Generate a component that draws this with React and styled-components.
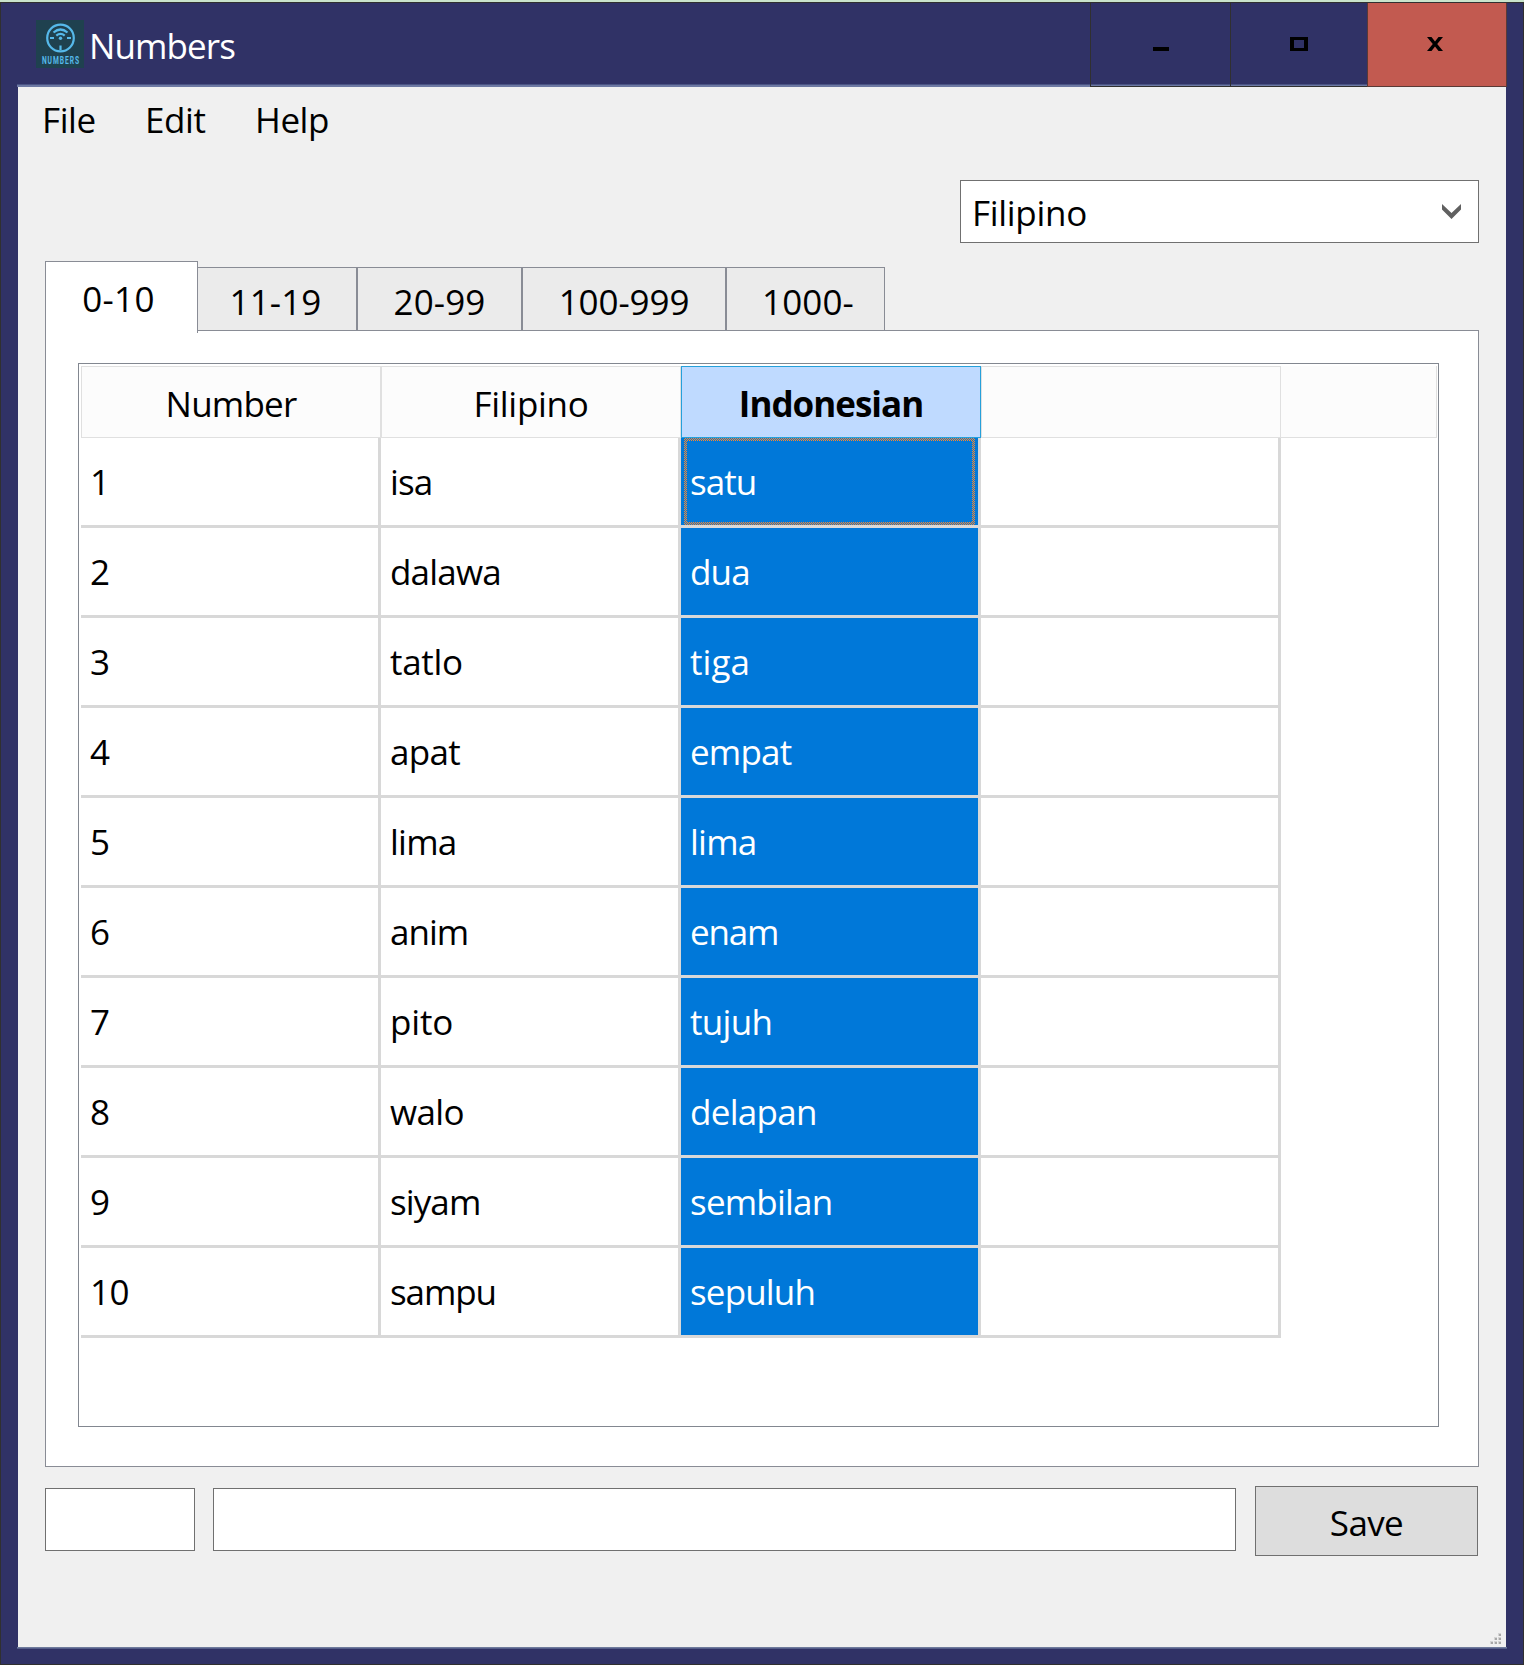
import React from "react";
import styled, { createGlobalStyle, css } from "styled-components";

const GlobalStyle = createGlobalStyle`
  *, *::before, *::after { box-sizing: border-box; }
  body { margin: 0; background: #303266; }
`;

const Screen = styled.div`
  width: 1524px;
  height: 1665px;
  border-top: 2px solid #c9e4cc;
  font-family: "Open Sans", "Noto Sans", sans-serif;
  font-size: 35px;
  line-height: 48px;
  color: #000;
`;

const Frame = styled.div`
  height: 1663px;
  display: flex;
  flex-direction: column;
  padding: 0 16px;
  background: #303266;
  border: 1px solid #303030;
`;

const TitleBar = styled.header`
  flex: none;
  height: 84px;
  display: flex;
  align-items: flex-start;
  padding-left: 19px;
  background: linear-gradient(#303266 81px, #4a5384 81px, #4a5384 82px, #6d79a3 82px);
`;

const AppIcon = styled.svg`
  flex: none;
  width: 48px;
  height: 48px;
  margin-top: 17px;
  overflow: visible;
`;

const Title = styled.h1`
  flex: 1;
  margin: 19px 0 0 5px;
  font: inherit;
  color: #fff;
  letter-spacing: -0.9px;
`;

const WindowButton = styled.button`
  flex: none;
  width: ${(p) => p.$width}px;
  height: 84px;
  padding: 0;
  display: flex;
  border: solid ${(p) => (p.$close ? "#5a3a36" : "#303030")};
  border-width: 0 ${(p) => (p.$close ? 1 : 0)}px 1px 1px;
  background: ${(p) => (p.$close ? "#c25a50" : "transparent")};

  svg { display: block; margin: 34px 0 0 ${(p) => p.$inset}px; }
`;

const Client = styled.main`
  flex: none;
  height: 1560px;
  margin: 0 0 0 1px;
  width: 1488px;
  display: flex;
  flex-direction: column;
  background: #f0f0f0;
`;

const BottomEdge = styled.div`
  flex: none;
  height: 2px;
  background: linear-gradient(#6f7b9c 1px, #565f8a 1px);
`;

const MenuBar = styled.nav`
  display: flex;
  height: 93px;
  padding: 9px 0 0 24px;
`;

const MenuItem = styled.span`
  width: ${(p) => p.$width}px;
  letter-spacing: -0.43px;
`;

const Combo = styled.div`
  align-self: flex-end;
  display: flex;
  justify-content: space-between;
  width: 519px;
  height: 63px;
  margin-right: 27px;
  padding: 8px 17px 0 11px;
  background: #fff;
  border: 1px solid #707070;
  letter-spacing: -0.3px;

  svg { margin-top: 15px; }
`;

const TabRow = styled.div`
  display: flex;
  align-items: flex-end;
  height: 73px;
  margin: 18px 0 -4px 27px;
  position: relative;
`;

const Tab = styled.div`
  width: ${(p) => p.$width}px;
  text-align: center;
  text-indent: ${(p) => p.$indent || 0}px;
  letter-spacing: ${(p) => p.$spacing}px;
  border: 1px solid #898c95;
  border-bottom: 0;
  ${(p) =>
    p.$active
      ? css`
          height: 72px;
          margin-bottom: 1px;
          padding-top: 13px;
          padding-right: 6px;
          background: #fff;
        `
      : css`
          height: 64px;
          margin-bottom: 3px;
          padding-top: 10px;
          background: #ebebeb;
          border-bottom: 1px solid #898c95;
        `}
  ${(p) => p.$joined && "border-left: 0; padding-right: 3px;"}
`;

const Pane = styled.section`
  height: 1137px;
  width: 1434px;
  margin-left: 27px;
  padding: 32px 39px 0 32px;
  background: #fff;
  border: 1px solid #898c95;
`;

const Grid = styled.div`
  height: 1064px;
  padding: 2px 0 0 2px;
  border: 1px solid #828790;
`;

const HeaderRow = styled.div`
  display: flex;
  height: 72px;
`;

const HeaderCell = styled.div`
  width: 300px;
  padding-top: 13px;
  text-align: center;
  letter-spacing: ${(p) => p.$spacing}px;
  background: #fcfcfc;
  border: 1px solid #e0e0e0;
  ${(p) =>
    p.$selected &&
    css`
      font-weight: 700;
      background: #bfdaff;
      border-color: #26a0da;
    `}
`;

const HeaderFill = styled.div`
  width: 156px;
  background: #fcfcfc;
  border: solid #e0e0e0;
  border-width: 0 1px 1px 0;
`;

const Row = styled.div`
  display: flex;
  height: 90px;
`;

const Cell = styled.div`
  width: 300px;
  padding: ${(p) => (p.$focused ? "0 3px" : "20px 9px 0")};
  letter-spacing: ${(p) => p.$spacing}px;
  border: solid #d8d8d8;
  border-width: 0 3px 3px 0;
  background: ${(p) => (p.$selected ? "#0078d9" : "#fff")};
  background-clip: padding-box;
  color: ${(p) => (p.$selected ? "#fff" : "#000")};
`;

const FocusRing = styled.div`
  height: 87px;
  padding: 3px;
  background: repeating-conic-gradient(#ff8728 0 25%, #0078d9 0 50%) 0 0 / 2px 2px;
`;

const FocusFill = styled.div`
  height: 81px;
  padding: 17px 3px 0;
  background: #0078d9;
`;

const Footer = styled.footer`
  display: flex;
  align-items: flex-start;
  padding: 19px 28px 0 27px;
`;

const Field = styled.div`
  width: ${(p) => p.$width}px;
  height: 63px;
  margin: 2px ${(p) => p.$gap}px 0 0;
  background: #fff;
  border: 1px solid #707070;
`;

const SaveButton = styled.button`
  width: 223px;
  height: 70px;
  padding: 3px 0 0;
  font: inherit;
  line-height: 48px;
  letter-spacing: -0.6px;
  color: #000;
  background: #dddddd;
  border: 1px solid #707070;
`;

const Grip = styled.svg`
  display: block;
  margin: auto 5px 3px auto;
`;

const TABS = [
  { label: "0-10", width: 153, spacing: 0.3 },
  { label: "11-19", width: 159, spacing: 0.1 },
  { label: "20-99", width: 165, spacing: 0.1 },
  { label: "100-999", width: 204, spacing: -0.1 },
  { label: "1000-", width: 159, spacing: 0.1, indent: 5 },
];

const ROWS = [
  [["isa", -0.9], ["satu", -0.95]],
  [["dalawa", -0.8], ["dua", -0.8]],
  [["tatlo", -0.3], ["tiga", 0.1]],
  [["apat", -0.7], ["empat", -0.8]],
  [["lima", -0.75], ["lima", -0.75]],
  [["anim", -1], ["enam", -1.15]],
  [["pito", -0.15], ["tujuh", -0.7]],
  [["walo", -0.6], ["delapan", -0.7]],
  [["siyam", -0.9], ["sembilan", -0.8]],
  [["sampu", -1.1], ["sepuluh", -0.85]],
];

const GRIP_DOTS = [[8, 0], [4, 4], [8, 4], [0, 8], [4, 8], [8, 8]];

function Logo() {
  return (
    <AppIcon viewBox="0 0 48 48">
      <rect width="48" height="48" fill="#1f414f" />
      <g fill="none" stroke="#56b9ea" strokeWidth="2.2">
        <circle cx="24.5" cy="18" r="13.3" />
        <path d="M14 18h4M31 18h4M24.5 25.5v4.5" />
        <path d="M17.5 12.5q7-6 14 0M20.3 15.6q4.2-3.6 8.4 0" />
      </g>
      <circle cx="24.5" cy="18.3" r="1.7" fill="#56b9ea" />
      <text
        x="9.5" y="44.2" textLength="60" lengthAdjust="spacing"
        fontFamily="Roboto, sans-serif" fontSize="10.8" fontWeight="700" fill="#56b9ea"
        transform="scale(0.62 1)"
      >
        NUMBERS
      </text>
    </AppIcon>
  );
}

export default function App() {
  return (
    <Screen>
      <GlobalStyle />
      <Frame>
        <TitleBar>
          <Logo />
          <Title>Numbers</Title>
          <WindowButton $width={140} $inset={62} aria-label="Minimize">
            <svg width="16" height="14"><path d="M0 10h16v4H0z" /></svg>
          </WindowButton>
          <WindowButton $width={137} $inset={59} aria-label="Maximize">
            <svg width="18" height="14"><path fillRule="evenodd" d="M0 0h18v14H0zM4 3v8h10V3z" /></svg>
          </WindowButton>
          <WindowButton $close $width={140} $inset={59} aria-label="Close">
            <svg width="16" height="14">
              <path d="M0 0h4.5L8 4.5 11.5 0H16l-5.8 7L16 14h-4.5L8 9.5 4.5 14H0l5.8-7z" />
            </svg>
          </WindowButton>
        </TitleBar>
        <Client>
          <MenuBar>
            <MenuItem $width={103}>File</MenuItem>
            <MenuItem $width={110}>Edit</MenuItem>
            <MenuItem $width={90}>Help</MenuItem>
          </MenuBar>
          <Combo>
            <span>Filipino</span>
            <svg width="19" height="15"><path d="M0 0l9.5 9L19 0v5.5L9.5 15 0 5.5z" fill="#606060" /></svg>
          </Combo>
          <TabRow>
            {TABS.map((t, i) => (
              <Tab
                key={t.label}
                $width={t.width}
                $spacing={t.spacing}
                $indent={t.indent}
                $active={i === 0}
                $joined={i === 1}
              >
                {t.label}
              </Tab>
            ))}
          </TabRow>
          <Pane>
            <Grid>
              <HeaderRow>
                <HeaderCell $spacing={-0.8}>Number</HeaderCell>
                <HeaderCell $spacing={-0.3}>Filipino</HeaderCell>
                <HeaderCell $selected $spacing={-1}>Indonesian</HeaderCell>
                <HeaderCell />
                <HeaderFill />
              </HeaderRow>
              {ROWS.map(([filipino, indonesian], i) => (
                <Row key={i}>
                  <Cell $spacing={-0.6}>{i + 1}</Cell>
                  <Cell $spacing={filipino[1]}>{filipino[0]}</Cell>
                  <Cell $selected $focused={i === 0} $spacing={indonesian[1]}>
                    {i === 0 ? (
                      <FocusRing>
                        <FocusFill>{indonesian[0]}</FocusFill>
                      </FocusRing>
                    ) : (
                      indonesian[0]
                    )}
                  </Cell>
                  <Cell />
                </Row>
              ))}
            </Grid>
          </Pane>
          <Footer>
            <Field $width={150} $gap={18} />
            <Field $width={1023} $gap={19} />
            <SaveButton>Save</SaveButton>
          </Footer>
          <Grip width="11" height="11">
            {GRIP_DOTS.map(([x, y]) => (
              <React.Fragment key={`${x}-${y}`}>
                <rect x={x} y={y} width="3" height="3" fill="#d4d4d4" />
                <rect x={x + 1} y={y + 1} width="2" height="2" fill="#a8a8a8" />
              </React.Fragment>
            ))}
          </Grip>
        </Client>
        <BottomEdge />
      </Frame>
    </Screen>
  );
}
